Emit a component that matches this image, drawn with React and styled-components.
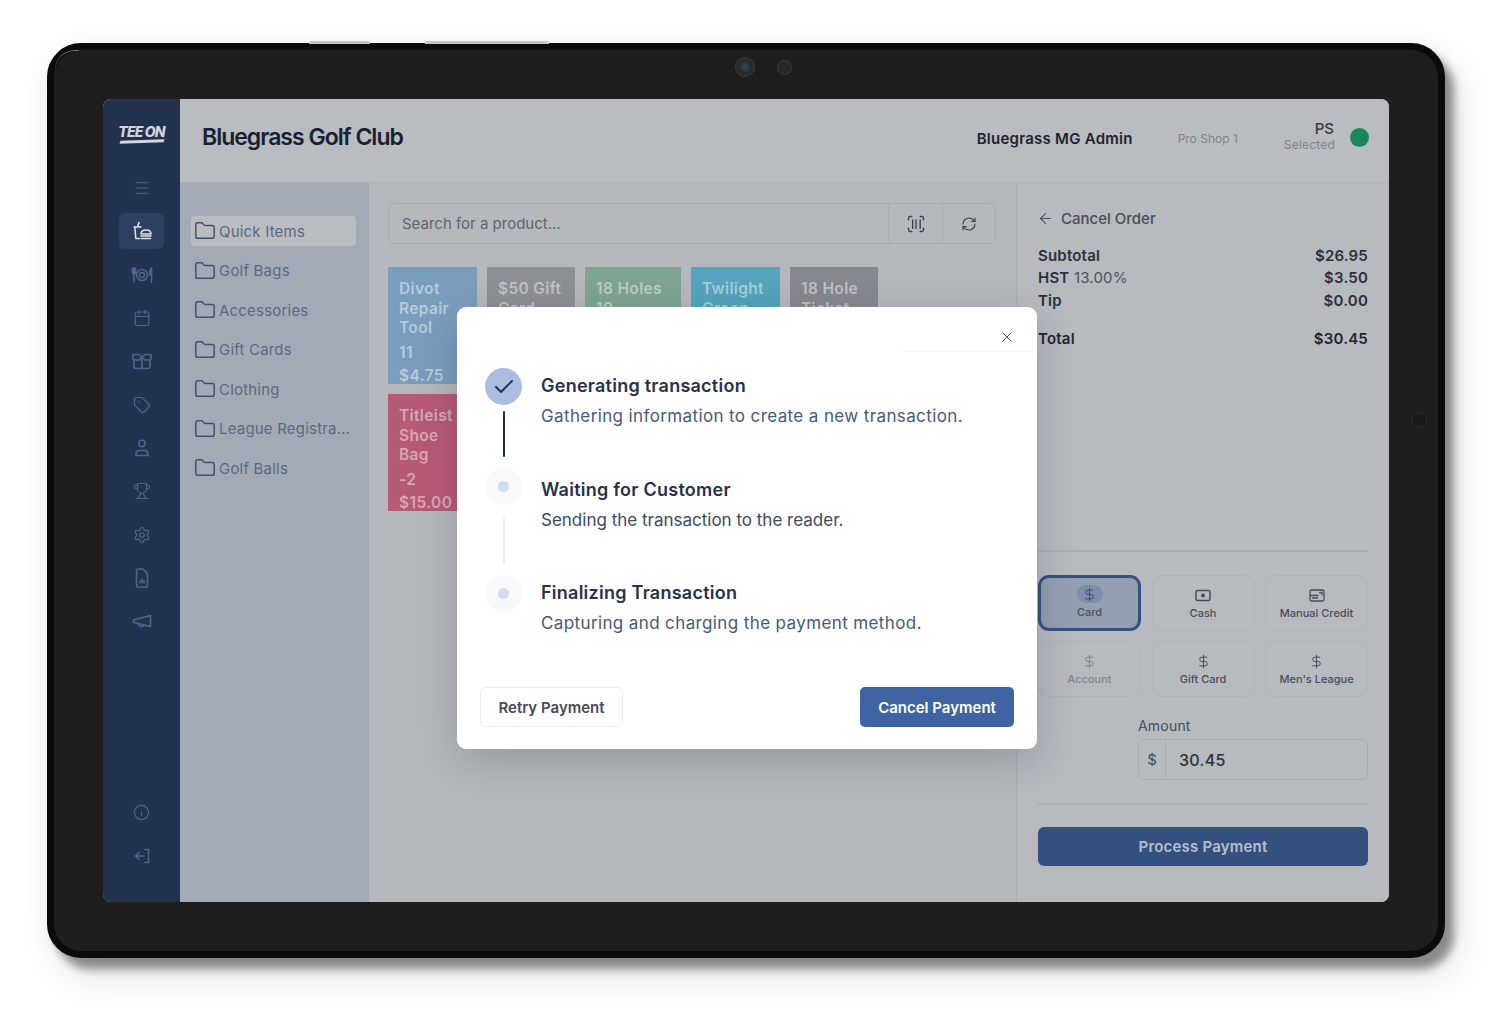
import styled, { createGlobalStyle } from 'styled-components';
import {
  Menu, Calendar, Tag, Trophy, Settings, Info, Folder,
  ScanBarcode, RefreshCw, ArrowLeft, X, Check, DollarSign,
} from 'lucide-react';

const GlobalStyle = createGlobalStyle`
  * { box-sizing: border-box; }
  html, body { margin: 0; background: #fff; }
  body { font-family: Inter, "Noto Sans", sans-serif; }
`;

const QuickSaleIcon = (props) => (
  <svg width="22" height="22" viewBox="0 0 22 22" fill="none" stroke="currentColor" strokeWidth="1.6" strokeLinecap="round" strokeLinejoin="round" {...props}>
    <path d="M8 2.5 6.6 7M3 7h7M3.8 7l1 11.500h4" />
    <path d="M10 14c0-2.600 2.200-4 5-4s5 1.400 5 4z" />
    <path d="M10 16h10M10.500 18.500h9" />
  </svg>
);

const PlateIcon = (props) => (
  <svg width="22" height="22" viewBox="0 0 22 22" fill="none" stroke="currentColor" strokeWidth="1.500" strokeLinecap="round" {...props}>
    <circle cx="11" cy="11" r="5.500" />
    <circle cx="11" cy="11" r="2.500" />
    <path d="M1.500 4v4c0 1.500 1 2 1.500 2s1.500-.5 1.500-2V4M3 4v14M20.500 4v14M20.500 4c-1.500 1-2 3-2 7h2" />
  </svg>
);

const GiftIcon = (props) => (
  <svg width="22" height="22" viewBox="0 0 22 22" fill="none" stroke="currentColor" strokeWidth="1.600" strokeLinejoin="round" {...props}>
    <path d="M3 10v6.500a2 2 0 0 0 2 2h12a2 2 0 0 0 2-2V10M11 7v11.500" />
    <path d="M2 4.500h6L11 7 8 10H3a1 1 0 0 1-1-1zM20 4.500h-6L11 7l3 3h5a1 1 0 0 0 1-1z" />
  </svg>
);

const UserIcon = (props) => (
  <svg width="22" height="22" viewBox="0 0 22 22" fill="none" stroke="currentColor" strokeWidth="1.600" {...props}>
    <circle cx="11" cy="6.500" r="3.200" />
    <path d="M5 18.500v-1.500c0-2 1.500-3.500 3.500-3.500h5c2 0 3.500 1.500 3.500 3.500v1.500z" strokeLinejoin="round" />
  </svg>
);

const ReportIcon = (props) => (
  <svg width="22" height="22" viewBox="0 0 22 22" fill="none" stroke="currentColor" strokeWidth="1.500" strokeLinejoin="round" {...props}>
    <path d="M5.500 3.500a1.500 1.500 0 0 1 1.500-1.500h5l4.500 4.500v12a1.500 1.500 0 0 1-1.500 1.500H7a1.500 1.500 0 0 1-1.500-1.500z" />
    <path d="M9 16v-2M11 16v-4M13 16v-2.500" strokeLinecap="round" />
  </svg>
);

const MegaphoneIcon = (props) => (
  <svg width="22" height="22" viewBox="0 0 22 22" fill="none" stroke="currentColor" strokeWidth="1.600" strokeLinejoin="round" strokeLinecap="round" {...props}>
    <path d="M2.500 10 19.500 5.500v11L2.500 12.500z" />
    <path d="M7.500 14a3 3 0 0 0 5.500 1.200" />
  </svg>
);

const LogoutIcon = (props) => (
  <svg width="22" height="22" viewBox="0 0 22 22" fill="none" stroke="currentColor" strokeWidth="1.600" strokeLinecap="round" strokeLinejoin="round" {...props}>
    <path d="M14 4.500h3.500v13H14M13 11H4.500M8 7.500 4.500 11 8 14.500" />
  </svg>
);

const CashIcon = (props) => (
  <svg width="16" height="13" viewBox="0 0 16 13" fill="none" stroke="currentColor" strokeWidth="1.500" {...props}>
    <rect x="1" y="1.500" width="14" height="10" rx="1.500" />
    <circle cx="8" cy="6.500" r="2" fill="currentColor" stroke="none" />
  </svg>
);

const CreditIcon = (props) => (
  <svg width="16" height="13" viewBox="0 0 16 13" fill="none" stroke="currentColor" strokeWidth="1.300" {...props}>
    <rect x="1" y="1" width="14" height="11" rx="1.500" />
    <path d="M1 6.500h8.500M3 9h6M10 3.500h3v3" />
  </svg>
);

const topNav = [
  { icon: Menu, key: 'menu' },
  { icon: QuickSaleIcon, key: 'sale', active: true },
  { icon: PlateIcon, key: 'food' },
  { icon: Calendar, key: 'calendar' },
  { icon: GiftIcon, key: 'gift' },
  { icon: Tag, key: 'tag' },
  { icon: UserIcon, key: 'user' },
  { icon: Trophy, key: 'trophy' },
  { icon: Settings, key: 'settings' },
  { icon: ReportIcon, key: 'report' },
  { icon: MegaphoneIcon, key: 'megaphone' },
];

const categories = ['Quick Items', 'Golf Bags', 'Accessories', 'Gift Cards', 'Clothing', 'League Registra...', 'Golf Balls'];

const tiles = [
  { name: 'Divot Repair Tool', qty: '11', price: '$4.75', color: '#7b9dbd', width: 89 },
  { name: '$50 Gift Card', color: '#8d9094', width: 88 },
  { name: '18 Holes 10', color: '#7fa491', width: 96 },
  { name: 'Twilight Green', color: '#54a5bd', width: 89 },
  { name: '18 Hole Ticket', color: '#85888e', width: 88 },
  { name: 'Titleist Shoe Bag', qty: '-2', price: '$15.00', color: '#b65a75', width: 89 },
];

const totals = [
  { label: 'Subtotal', value: '$26.95' },
  { label: 'HST', extra: '13.00%', value: '$3.50' },
  { label: 'Tip', value: '$0.00' },
];

const payments = [
  { label: 'Card', icon: 'dollar', active: true },
  { label: 'Cash', icon: 'cash' },
  { label: 'Manual Credit', icon: 'credit' },
  { label: 'Account', icon: 'dollar', muted: true },
  { label: 'Gift Card', icon: 'dollar' },
  { label: "Men's League", icon: 'dollar' },
];

const steps = [
  { title: 'Generating transaction', text: 'Gathering information to create a new transaction.', done: true },
  { title: 'Waiting for Customer', text: 'Sending the transaction to the reader.', dark: true, lift: 4 },
  { title: 'Finalizing Transaction', text: 'Capturing and charging the payment method.', last: true },
];

function PayIcon({ type }) {
  if (type === 'cash') return <CashIcon />;
  if (type === 'credit') return <CreditIcon />;
  return <DollarSign size={15} strokeWidth={1.6} />;
}

export default function App() {
  return (
    <Page>
      <GlobalStyle />
      <Device>
        <Highlight />
        <SideButton $left={255} $width={61} />
        <SideButton $left={371} $width={124} />
        <Sensor />
        <TopBezel>
          <Camera $size={20} $lens />
          <Camera $size={15} />
        </TopBezel>
        <Screen>
          <Sidebar>
            <Logo>
              <LogoText>TEE ON</LogoText>
              <LogoBar />
            </Logo>
            {topNav.map(({ icon: Icon, key, active }) => (
              <NavItem key={key} $active={active}>
                <Icon size={18} strokeWidth={1.6} />
              </NavItem>
            ))}
            <NavBottom>
              <NavItem><Info size={17} strokeWidth={1.6} /></NavItem>
              <NavItem><LogoutIcon /></NavItem>
            </NavBottom>
          </Sidebar>
          <Content>
            <Header>
              <ClubName>Bluegrass Golf Club</ClubName>
              <AdminName>Bluegrass MG Admin</AdminName>
              <ShopName>Pro Shop 1</ShopName>
              <Selected>
                <Initials>PS</Initials>
                <SelectedLabel>Selected</SelectedLabel>
              </Selected>
              <StatusDot />
            </Header>
            <Body>
              <Categories>
                {categories.map((name, i) => (
                  <Category key={name} $active={i === 0}>
                    <Folder size={22} strokeWidth={1.6} />
                    {name}
                  </Category>
                ))}
              </Categories>
              <Products>
                <SearchBar>
                  <SearchText>Search for a product...</SearchText>
                  <SearchButton $width={54}><ScanBarcode size={20} strokeWidth={1.7} /></SearchButton>
                  <SearchButton $width={53}><RefreshCw size={16} strokeWidth={1.8} /></SearchButton>
                </SearchBar>
                <TileGrid>
                  {tiles.map((tile) => (
                    <Tile key={tile.name} $color={tile.color} $width={tile.width}>
                      <TileName>{tile.name}</TileName>
                      {tile.qty && <TileQty>{tile.qty}</TileQty>}
                      {tile.price && <TilePrice>{tile.price}</TilePrice>}
                    </Tile>
                  ))}
                </TileGrid>
              </Products>
              <Order>
                <CancelOrder><ArrowLeft size={17} strokeWidth={1.5} />Cancel Order</CancelOrder>
                <TotalsList>
                  {totals.map((row) => (
                    <TotalRow key={row.label}>
                      <span>{row.label}{row.extra && <TotalExtra> {row.extra}</TotalExtra>}</span>
                      <span>{row.value}</span>
                    </TotalRow>
                  ))}
                </TotalsList>
                <GrandTotal>
                  <span>Total</span>
                  <span>$30.45</span>
                </GrandTotal>
                <Rule $top={200} />
                <PaymentGrid>
                  {payments.map((p) => (
                    <PaymentButton key={p.label} $active={p.active} $muted={p.muted}>
                      <PaymentIcon $active={p.active}><PayIcon type={p.icon} /></PaymentIcon>
                      {p.label}
                    </PaymentButton>
                  ))}
                </PaymentGrid>
                <AmountBlock>
                  <AmountLabel>Amount</AmountLabel>
                  <AmountField>
                    <AmountPrefix>$</AmountPrefix>
                    <AmountValue>30.45</AmountValue>
                  </AmountField>
                </AmountBlock>
                <Rule $top={23} />
                <ProcessButton>Process Payment</ProcessButton>
              </Order>
            </Body>
          </Content>
          <Modal>
            <ModalTop>
              <CloseButton><X size={16} strokeWidth={1.5} /></CloseButton>
            </ModalTop>
            <StepList>
              {steps.map((step) => (
                <Step key={step.title}>
                  <StepMarker $lift={step.lift}>
                    <StepCircle $done={step.done}>
                      {step.done ? <Check size={24} strokeWidth={1.8} /> : <StepDot />}
                    </StepCircle>
                    {!step.last && <StepLine $done={step.done} />}
                  </StepMarker>
                  <StepBody>
                    <StepTitle>{step.title}</StepTitle>
                    <StepText $dark={step.dark}>{step.text}</StepText>
                  </StepBody>
                </Step>
              ))}
            </StepList>
            <ModalFooter>
              <RetryButton>Retry Payment</RetryButton>
              <CancelButton>Cancel Payment</CancelButton>
            </ModalFooter>
          </Modal>
        </Screen>
      </Device>
    </Page>
  );
}

const Page = styled.div`
  width: 1500px;
  height: 1017px;
  padding: 43px 0 0 47px;
  overflow: hidden;
  background: #fff;
`;

const Device = styled.div`
  position: relative;
  width: 1398px;
  height: 915px;
  padding: 0 49px;
  border: 7px solid #0b0b0b;
  border-radius: 34px;
  background: #1e1e1e;
  box-shadow: 9px 11px 9px rgba(0, 0, 0, 0.4), 12px 18px 36px rgba(0, 0, 0, 0.12), 0 0 30px rgba(0, 0, 0, 0.03);
`;

const Highlight = styled.div`
  position: absolute;
  top: 0;
  left: 1px;
  width: 24px;
  height: 20px;
  border-top: 1px solid #77797c;
  border-radius: 26px 0 0 0;
`;

const SideButton = styled.div`
  position: absolute;
  top: -9px;
  left: ${(p) => p.$left}px;
  width: ${(p) => p.$width}px;
  height: 3px;
  border-radius: 2px 2px 0 0;
  background: #c4c5c6;
`;

const Sensor = styled.div`
  position: absolute;
  top: 362px;
  left: 1357px;
  width: 16px;
  height: 16px;
  border: 1.5px solid #2e2f31;
  border-radius: 50%;
  background: #18191a;
`;

const TopBezel = styled.div`
  height: 49px;
  display: flex;
  align-items: center;
  justify-content: center;
  gap: 22px;
  padding: 0 0 15px 34px;
`;

const Camera = styled.div`
  width: ${(p) => p.$size}px;
  height: ${(p) => p.$size}px;
  border-radius: 50%;
  border: 1px solid #3b3c3d;
  background: ${(p) => (p.$lens ? 'radial-gradient(circle, #2f4152 0 18%, #2a2b2c 45%)' : '#262728')};
`;

const Screen = styled.div`
  position: relative;
  width: 1286px;
  height: 803px;
  display: grid;
  grid-template-columns: 77px 1fr;
  border-radius: 8px;
  overflow: hidden;
  background: #b8bbc0;
`;

const Sidebar = styled.nav`
  display: flex;
  flex-direction: column;
  align-items: center;
  padding-top: 25px;
  background: #22324f;
  color: #50658c;
`;

const Logo = styled.div`
  width: 46px;
  height: 46px;
  display: flex;
  flex-direction: column;
  align-items: center;
`;

const LogoText = styled.span`
  font-size: 14px;
  line-height: 15px;
  font-weight: 800;
  font-style: italic;
  letter-spacing: -0.8px;
  white-space: nowrap;
  color: #d3d7dc;
`;

const LogoBar = styled.span`
  width: 44px;
  height: 3px;
  margin-top: 1px;
  background: #d3d7dc;
  transform: rotate(-2deg) skewX(-20deg);
`;

const NavItem = styled.div`
  width: 45px;
  height: 36px;
  margin-bottom: 7.33px;
  display: flex;
  align-items: center;
  justify-content: center;
  border-radius: 6px;
  background: ${(p) => (p.$active ? '#2d4062' : 'transparent')};
  color: ${(p) => (p.$active ? '#dde1e6' : 'inherit')};
`;

const NavBottom = styled.div`
  margin-top: auto;
  padding-bottom: 21px;
`;

const Content = styled.div`
  display: flex;
  flex-direction: column;
  min-width: 0;
`;

const Header = styled.header`
  height: 84px;
  flex: none;
  display: flex;
  align-items: center;
  padding: 0 20px 10px 22px;
  border-bottom: 1px solid #afb3b8;
  background: #b9bcc1;
`;

const ClubName = styled.h1`
  margin: 3px auto 0 0;
  font-size: 23px;
  line-height: 28px;
  font-weight: 600;
  letter-spacing: -1px;
  color: #182132;
`;

const AdminName = styled.span`
  margin-top: 6px;
  font-size: 15px;
  font-weight: 600;
  letter-spacing: 0.25px;
  color: #1d2430;
`;

const ShopName = styled.span`
  margin: 6px 46px 0 45px;
  font-size: 12px;
  color: #7f848b;
`;

const Selected = styled.div`
  display: flex;
  flex-direction: column;
  align-items: flex-end;
  margin-top: 3px;
`;

const Initials = styled.span`
  font-size: 15px;
  line-height: 16px;
  font-weight: 500;
  margin-right: 1px;
  color: #343a44;
`;

const SelectedLabel = styled.span`
  font-size: 12px;
  line-height: 16px;
  letter-spacing: 0.2px;
  color: #7f848b;
`;

const StatusDot = styled.span`
  width: 19px;
  height: 19px;
  margin: 3px 0 0 15px;
  border-radius: 50%;
  background: #1b8560;
`;

const Body = styled.div`
  flex: 1;
  display: grid;
  grid-template-columns: 189px 647px 373px;
  min-height: 0;
`;

const Categories = styled.aside`
  display: flex;
  flex-direction: column;
  gap: 9.5px;
  padding: 33px 13px 0 11px;
  background: #a2abb5;
`;

const Category = styled.div`
  height: 30px;
  display: flex;
  align-items: center;
  gap: 3px;
  padding-left: 3px;
  border-radius: 4px;
  background: ${(p) => (p.$active ? '#b9bcc1' : 'transparent')};
  font-size: 15px;
  letter-spacing: 0.2px;
  white-space: nowrap;
  color: #5c697c;
  svg { flex: none; color: #404f6a; }
`;

const Products = styled.section`
  padding: 20px 20px 0 19px;
  background: #b5b8bc;
`;

const SearchBar = styled.div`
  height: 41px;
  display: flex;
  border: 1px solid #a9adb2;
  border-radius: 6px;
`;

const SearchText = styled.span`
  flex: 1;
  align-self: center;
  padding-left: 13px;
  font-size: 15px;
  color: #5f656e;
`;

const SearchButton = styled.div`
  width: ${(p) => p.$width}px;
  display: flex;
  align-items: center;
  justify-content: center;
  border-left: 1px solid #a9adb2;
  color: #3c424c;
`;

const TileGrid = styled.div`
  display: flex;
  flex-wrap: wrap;
  gap: 10px;
  width: 500px;
  margin-top: 23px;
`;

const Tile = styled.div`
  width: ${(p) => p.$width}px;
  height: 117px;
  padding: 12px 11px 0;
  overflow: hidden;
  background: ${(p) => p.$color};
  color: rgba(255, 255, 255, 0.48);
`;

const TileName = styled.div`
  font-size: 15.5px;
  line-height: 19.5px;
  font-weight: 600;
  letter-spacing: 0.35px;
`;

const TileQty = styled.div`
  margin-top: 5px;
  font-size: 15.5px;
  line-height: 20px;
  font-weight: 600;
  letter-spacing: 0.4px;
`;

const TilePrice = styled(TileQty)`
  margin-top: 3px;
`;

const Order = styled.section`
  padding: 24px 21px 0;
  border-left: 1px solid #aaaeb3;
  background: #b7babf;
`;

const CancelOrder = styled.div`
  height: 22px;
  display: flex;
  align-items: center;
  gap: 7px;
  font-size: 15px;
  font-weight: 500;
  color: #474d57;
  svg { margin-left: -1px; }
`;

const TotalsList = styled.div`
  margin-top: 15px;
`;

const TotalRow = styled.div`
  height: 22.5px;
  display: flex;
  align-items: center;
  justify-content: space-between;
  font-size: 15px;
  font-weight: 600;
  letter-spacing: 0.2px;
  color: #2b313b;
`;

const TotalExtra = styled.span`
  font-weight: 400;
  color: #4c525c;
`;

const GrandTotal = styled(TotalRow)`
  margin-top: 16px;
  color: #1f2530;
`;

const Rule = styled.div`
  height: 2px;
  margin-top: ${(p) => p.$top}px;
  background: #acb0b5;
`;

const PaymentGrid = styled.div`
  display: grid;
  grid-template-columns: repeat(3, 103px);
  justify-content: space-between;
  gap: 10px 0;
  margin-top: 23px;
`;

const PaymentButton = styled.div`
  height: 56px;
  display: flex;
  flex-direction: column;
  align-items: center;
  padding-top: ${(p) => (p.$active ? '7px' : '10px')};
  border: ${(p) => (p.$active ? '3px solid #33527f' : '1px solid #b0b4b9')};
  border-radius: 11px;
  background: ${(p) => (p.$active ? '#949fb2' : 'transparent')};
  font-size: 11px;
  font-weight: 500;
  color: ${(p) => (p.$muted ? '#80858c' : '#474d57')};
`;

const PaymentIcon = styled.span`
  width: 26px;
  height: 18px;
  margin-bottom: 2px;
  display: flex;
  align-items: center;
  justify-content: center;
  border-radius: 9px;
  background: ${(p) => (p.$active ? '#7c8dae' : 'transparent')};
`;

const AmountBlock = styled.div`
  width: 230px;
  margin: 20px 0 0 auto;
`;

const AmountLabel = styled.div`
  height: 22px;
  font-size: 14px;
  line-height: 18px;
  letter-spacing: 0.2px;
  color: #474d57;
`;

const AmountField = styled.div`
  height: 41px;
  display: flex;
  align-items: center;
  border: 1px solid #a9adb2;
  border-radius: 6px;
`;

const AmountPrefix = styled.span`
  width: 27px;
  height: 100%;
  display: flex;
  align-items: center;
  justify-content: center;
  border-right: 1px solid #a9adb2;
  font-size: 15px;
  color: #474d57;
`;

const AmountValue = styled.span`
  padding-left: 13px;
  font-size: 16px;
  font-weight: 500;
  letter-spacing: 0.3px;
  color: #2b313b;
`;

const ProcessButton = styled.div`
  height: 39px;
  margin-top: 22px;
  display: flex;
  align-items: center;
  justify-content: center;
  border-radius: 6px;
  background: #34507e;
  font-size: 15px;
  font-weight: 600;
  letter-spacing: 0.2px;
  color: #b6bfcd;
`;

const Modal = styled.div`
  position: absolute;
  top: 208px;
  left: 354px;
  width: 580px;
  height: 442px;
  display: flex;
  flex-direction: column;
  border-radius: 9px;
  background: #fff;
  box-shadow: 0 12px 40px rgba(30, 40, 55, 0.22);
`;

const ModalTop = styled.div`
  width: 131px;
  height: 45px;
  margin-left: auto;
  margin-right: 6px;
  display: flex;
  align-items: center;
  justify-content: flex-end;
  padding: 15px 16px 0 0;
  border-bottom: 1px solid #f5f6f8;
  color: #4a5060;
`;

const CloseButton = styled.span`
  display: flex;
`;

const StepList = styled.div`
  padding: 16px 0 0 28px;
`;

const Step = styled.div`
  height: 103.5px;
  display: flex;
  gap: 19px;
`;

const StepMarker = styled.div`
  width: 37px;
  display: flex;
  flex-direction: column;
  align-items: center;
  margin-top: ${(p) => -(p.$lift || 0)}px;
`;

const StepCircle = styled.div`
  width: 37px;
  height: 37px;
  flex: none;
  display: flex;
  align-items: center;
  justify-content: center;
  border-radius: 50%;
  background: ${(p) => (p.$done ? '#adbde2' : '#f7f9fb')};
  color: #1f2d4f;
`;

const StepDot = styled.span`
  width: 11px;
  height: 11px;
  border-radius: 50%;
  background: #cfddec;
`;

const StepLine = styled.div`
  width: 2px;
  height: ${(p) => (p.$done ? '46px' : '51px')};
  margin-top: ${(p) => (p.$done ? '6px' : '9px')};
  border-radius: 1px;
  background: ${(p) => (p.$done ? '#1f2d4f' : '#eef0f3')};
`;

const StepBody = styled.div`
  padding-top: 6px;
`;

const StepTitle = styled.div`
  font-size: 18px;
  line-height: 24px;
  font-weight: 600;
  letter-spacing: 0.25px;
  color: #27324a;
`;

const StepText = styled.div`
  margin-top: 7px;
  font-size: 17px;
  line-height: 23px;
  letter-spacing: ${(p) => (p.$dark ? '0' : '0.38px')};
  color: ${(p) => (p.$dark ? '#3c4964' : '#47597b')};
`;

const ModalFooter = styled.div`
  margin-top: auto;
  display: flex;
  justify-content: space-between;
  padding: 0 23px 22px;
`;

const RetryButton = styled.div`
  width: 143px;
  height: 40px;
  display: flex;
  align-items: center;
  justify-content: center;
  border: 1px solid #eceef1;
  border-radius: 5px;
  font-size: 15px;
  font-weight: 600;
  color: #474b55;
`;

const CancelButton = styled(RetryButton)`
  width: 154px;
  border: 0;
  background: #3e64a3;
  color: #fff;
`;
